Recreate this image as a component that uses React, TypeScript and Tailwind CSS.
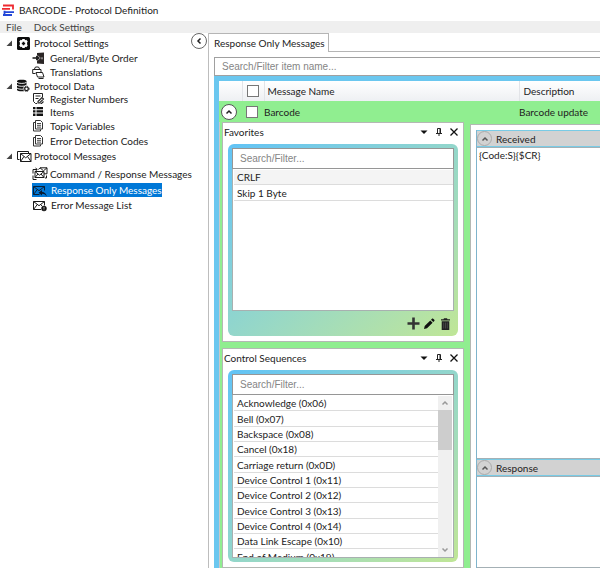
import type { ReactNode } from "react";
import { useState } from "react";

type IconName =
  | "settings"
  | "door"
  | "translate"
  | "database"
  | "register"
  | "items"
  | "pages"
  | "messages"
  | "exchange"
  | "reply"
  | "mailError";

const iconShapes: Record<IconName, ReactNode> = {
  settings: (
    <>
      <rect x="1" y="0" width="13" height="13" rx="1.5" fill="#0c0c0c" />
      <path
        d="M6.300 2h2.400l.3 1.300 1.300-.5 1.500 1.600-.7 1.100v2l.7 1.100-1.500 1.600-1.300-.5-.3 1.300H6.300L6 9.700l-1.300.5-1.500-1.600.7-1.100v-2l-.7-1.100 1.500-1.600 1.300.5z"
        fill="#fff"
      />
      <path d="M7.500 4.800v3.400M5.800 6.500h3.400" stroke="#0c0c0c" strokeWidth="1.600" />
    </>
  ),
  door: (
    <>
      <path d="M5 1L12 .5v11.500L5 11.500z" fill="#2b2626" />
      <path d="M.5 6H5" stroke="#222" strokeWidth="1.600" />
      <path d="M4 3.500L7.500 6 4 8.500z" fill="#222" />
      <path d="M5.500 3.500L8.300 6 5.500 8.500" stroke="#bbb" strokeWidth=".8" fill="none" />
      <path d="M10 5.300v2" stroke="#ddd" />
    </>
  ),
  translate: (
    <g fill="none" stroke="#222" strokeWidth="1">
      <path d="M3.500 7.500H.7V3.500H9V6M2.200 3.500L3.500 1h3l1.300 2.500" />
      <path d="M4 6.500h6.500l1.500 4.500H5.500z" fill="#fff" />
      <path d="M6.500 12.500h5" />
    </g>
  ),
  database: (
    <>
      <path d="M1 2.200C1 .3 10.500.3 10.500 2.200V11C10.500 12.800 1 12.800 1 11z" fill="#111" />
      <path
        d="M1 3.300c1.500 1.500 8 1.500 9.500 0M1 6.200c1.500 1.500 8 1.500 9.500 0M1 9.100c1.500 1.500 8 1.500 9.500 0"
        stroke="#fff"
        strokeWidth=".9"
        fill="none"
      />
      <circle cx="10.500" cy="9.800" r="3.300" fill="#fff" />
      <circle cx="10.500" cy="9.800" r="1.800" fill="none" stroke="#111" strokeWidth="1.200" />
      <circle cx="10.500" cy="9.800" r="2.600" fill="none" stroke="#111" strokeDasharray="1.100 1" />
    </>
  ),
  register: (
    <g fill="none" stroke="#222" strokeWidth="1">
      <path d="M5 11.500H3.500L1.500 9.500V1.500h9V5" />
      <path d="M3.500 4h5M3.500 6.500h3" />
      <path d="M6 9.500L10 5.500l1.500 1.500-4 4H6zM8.500 11.500h1l2-2" strokeWidth="1.100" />
    </g>
  ),
  items: (
    <path
      d="M1 2h2.500v2.300H1zM4.500 2H11v2.300H4.500zM1 5.300h2.500v2.300H1zM4.500 5.300H11v2.300H4.500zM1 8.600h2.500v2.300H1zM4.500 8.600H11v2.300H4.500z"
      fill="#111"
    />
  ),
  pages: (
    <g fill="none" stroke="#333" strokeWidth="1">
      <path d="M3.500 1.500h5l2 2v6.500h-7z" />
      <path d="M3 3.500H1.500v8.500h7V10.500" />
      <path d="M5 4.500h4M5 6.300h4M5 8.100h4" strokeWidth=".9" />
    </g>
  ),
  messages: (
    <g fill="none" stroke="#1a1a1a" strokeWidth="1">
      <path d="M3.500 9.500H1.500v-8h11v2" />
      <path d="M4.500 3.500h10.500v8H4.500z" fill="#fff" />
      <path d="M4.500 3.500l5.200 4.300L15 3.500M4.500 11.500l3.500-5M15 11.500l-3.500-5" />
    </g>
  ),
  exchange: (
    <g fill="none" stroke="#1a1a1a" strokeWidth="1">
      <path d="M6.500 2.500L8 .8h7v6h-3" />
      <path d="M8 .8l3.500 3 3.500-3" />
      <path d="M3 4.500h9v6H3z" fill="#fff" />
      <path d="M3 4.500L7.500 8.200 12 4.500M3 10.500l3-3.500M12 10.500L9 7" />
      <path d="M1 6.500V2.500h4M3.500 1l1.800 1.500L3.500 4M1 8.500v4h3.500M14.500 8.500V11h-1.500" />
    </g>
  ),
  reply: (
    <>
      <path
        d="M7.500 10.500H1.500v-8h11v4M1.500 2.500L7 6.700l5.500-4.200M1.500 10.500l3.800-5"
        stroke="#0b2239"
        fill="none"
      />
      <path d="M10 6L6.500 8.700 10 11.500v-1.700c2 0 3.300.7 4.800 2.700C14.500 9.700 12.500 7.800 10 7.700z" fill="#061a30" />
    </>
  ),
  mailError: (
    <>
      <path
        d="M9 10.500H1.500v-8h11v4M1.500 2.500L7 6.700l5.500-4.200M1.500 10.500l3.800-5M8.700 5.500L10 7"
        stroke="#1a1a1a"
        fill="none"
      />
      <circle cx="12" cy="9.500" r="2.700" fill="#111" />
      <path d="M12 7.800v2M12 10.500v.8" stroke="#fff" strokeWidth=".7" />
    </>
  ),
};

const TreeIcon = ({ name }: { name: IconName }) => (
  <svg width="16" height="13" viewBox="0 0 16 13" className="shrink-0" aria-hidden="true">
    {iconShapes[name]}
  </svg>
);

const Chevron = ({ direction }: { direction: "up" | "left" }) => (
  <svg width="8" height="8" viewBox="0 0 8 8" fill="none" stroke="currentColor" strokeWidth="1.500">
    <path d={direction === "up" ? "M1.500 5.500L4 3l2.500 2.500" : "M5.500 1.500L3 4l2.500 2.500"} />
  </svg>
);

const treeItems: {
  label: string;
  icon: IconName;
  row: string;
  root?: boolean;
  textGap?: string;
}[] = [
  { label: "Protocol Settings", icon: "settings", row: "h-4", root: true },
  { label: "General/Byte Order", icon: "door", row: "h-3.5", textGap: "pl-0.5" },
  { label: "Translations", icon: "translate", row: "h-3.5", textGap: "pl-0.5" },
  { label: "Protocol Data", icon: "database", row: "h-[13px]", root: true },
  { label: "Register Numbers", icon: "register", row: "h-[13px]", textGap: "pl-0.5" },
  { label: "Items", icon: "items", row: "h-[13px]", textGap: "pl-0.5" },
  { label: "Topic Variables", icon: "pages", row: "h-[15px]", textGap: "pl-0.5" },
  { label: "Error Detection Codes", icon: "pages", row: "h-[15px]", textGap: "pl-0.5" },
  { label: "Protocol Messages", icon: "messages", row: "h-4", root: true },
  { label: "Command / Response Messages", icon: "exchange", row: "h-[19px]", textGap: "pl-0.5" },
  { label: "Response Only Messages", icon: "reply", row: "h-3.5", textGap: "pl-[3px]" },
  { label: "Error Message List", icon: "mailError", row: "h-4", textGap: "pl-[3px]" },
];

const controlSequences = [
  "Acknowledge (0x06)",
  "Bell (0x07)",
  "Backspace (0x08)",
  "Cancel (0x18)",
  "Carriage return (0x0D)",
  "Device Control 1 (0x11)",
  "Device Control 2 (0x12)",
  "Device Control 3 (0x13)",
  "Device Control 4 (0x14)",
  "Data Link Escape (0x10)",
  "End of Medium (0x19)",
];

const ProtocolTree = () => {
  const [selected, setSelected] = useState("Response Only Messages");

  return (
    <nav className="w-[191px] shrink-0 pt-[2px]">
      <ul>
        {treeItems.map((item) => (
          <li key={item.label} className={`flex items-center ${item.row}`}>
            {item.root && (
              <svg width="6" height="6" viewBox="0 0 6 6" className="ml-1.5 mr-1 shrink-0">
                <path d="M6 .5v5.500H.5z" fill="#444" />
              </svg>
            )}
            <button
              onClick={() => setSelected(item.label)}
              className={`flex items-center h-3.5 whitespace-nowrap ${item.root ? "gap-0.5" : "ml-8"} ${
                selected === item.label ? "bg-[#0078d7] text-white" : ""
              }`}
            >
              <TreeIcon name={item.icon} />
              <span className={item.textGap}>{item.label}</span>
            </button>
          </li>
        ))}
      </ul>
    </nav>
  );
};

const PanelFrame = ({ title, children }: { title: string; children: ReactNode }) => (
  <section className="flex flex-col h-[220px] bg-white border border-[#b4b8b4] pb-[5px]">
    <header className="flex items-center h-[21px] shrink-0 pl-px pr-[5px] pb-[3px]">
      <h2 className="flex-1">{title}</h2>
      <div className="flex items-center gap-[7px]">
        <button aria-label="Window options" className="w-2 h-2">
          <svg width="8" height="8" viewBox="0 0 8 8">
            <path d="M.5 2.500h7L4 6z" fill="#111" />
          </svg>
        </button>
        <button aria-label="Pin" className="w-2 h-2">
          <svg width="8" height="8" viewBox="0 0 8 8" fill="none" stroke="#222">
            <path d="M2.500 5V.500h3V5M1 5.500h6M4 5.500V8M5 1v4" />
          </svg>
        </button>
        <button aria-label="Close" className="w-2 h-2">
          <svg width="8" height="8" viewBox="0 0 8 8" fill="none" stroke="#111" strokeWidth="1.300">
            <path d="M.500.500l7 7M7.500.500l-7 7" />
          </svg>
        </button>
      </div>
    </header>
    <div className="flex flex-col flex-1 min-h-0 mx-[5px] p-1 rounded-[6px] bg-linear-to-br from-[#61c3f6] to-[#c0e696]">
      {children}
    </div>
  </section>
);

const ListRow = ({ text, highlighted }: { text: string; highlighted?: boolean }) => (
  <li
    className={`flex items-center h-[15px] nth-[3n+2]:h-4 border-b border-[#dcdcdc] pl-[3px] ${
      highlighted ? "bg-[#f4f4f4]" : ""
    }`}
  >
    {text}
  </li>
);

const FilterInput = ({ label }: { label: string }) => (
  <input
    type="text"
    aria-label={label}
    placeholder="Search/Filter..."
    className="h-[21px] shrink-0 w-full bg-white border border-[#969696] px-[7px] font-['Liberation_Sans',Arial,sans-serif] placeholder:text-[#858585]"
  />
);

const FavoritesPanel = () => (
  <PanelFrame title="Favorites">
    <FilterInput label="Filter favorites" />
    <ul className="flex-1 bg-white border border-t-0 border-[#a8b0b0] pl-px pt-px">
      <ListRow text="CRLF" highlighted />
      <ListRow text="Skip 1 Byte" />
    </ul>
    <div className="flex items-center justify-end gap-[3px] h-[21px] pt-1 pr-1">
      <button aria-label="Add">
        <svg width="13" height="13" viewBox="0 0 13 13" stroke="#333" strokeWidth="2.600">
          <path d="M6.500.500v12M.500 6.500h12" />
        </svg>
      </button>
      <button aria-label="Edit">
        <svg width="12" height="12" viewBox="0 0 12 12" fill="#111">
          <path d="M1 11l.700-3L7.300 2.400l2.300 2.300L4 10.300zM8 1.700l1-1c.4-.4.9-.3 1.200 0l1.100 1.100c.4.4.4.8 0 1.200l-1 1z" />
        </svg>
      </button>
      <button aria-label="Delete" className="pl-[3px]">
        <svg width="9" height="12" viewBox="0 0 9 12" fill="#222">
          <path d="M0 1.200h2.500L3 .200h3l.500 1H9v1.300H0zM.700 3.200h7.600V12H.700z" />
          <path d="M2.700 4.500v6M4.500 4.500v6M6.300 4.500v6" stroke="#555" strokeWidth=".7" />
        </svg>
      </button>
    </div>
  </PanelFrame>
);

const ControlSequencesPanel = () => (
  <PanelFrame title="Control Sequences">
    <FilterInput label="Filter control sequences" />
    <div className="flex flex-1 min-h-0 bg-white border border-t-0 border-[#a8b0b0] pl-px pt-px pr-px">
      <ul className="flex-1 overflow-hidden">
        {controlSequences.map((name) => (
          <ListRow key={name} text={name} />
        ))}
      </ul>
      <div className="flex flex-col w-3.5 shrink-0 bg-[#f0f0f0] text-[#999]">
        <button aria-label="Scroll up" className="flex items-center justify-center h-3.5">
          <Chevron direction="up" />
        </button>
        <div className="h-10 bg-[#cdcdcd]" />
        <button aria-label="Scroll down" className="flex items-center justify-center h-3.5 mt-auto rotate-180">
          <Chevron direction="up" />
        </button>
      </div>
    </div>
  </PanelFrame>
);

const MessageSection = ({
  title,
  value,
  height,
}: {
  title: string;
  value: string;
  height: string;
}) => (
  <section className={`flex flex-col ${height}`}>
    <header className="flex items-center gap-1 h-[17px] shrink-0 bg-[#d2d2d2] border-y border-[#79cbe5]">
      <button
        aria-label={`Collapse ${title}`}
        className="flex items-center justify-center w-[15px] h-[15px] rounded-full border border-[#aaa] text-[#555]"
      >
        <Chevron direction="up" />
      </button>
      <h2>{title}</h2>
    </header>
    <textarea
      aria-label={title}
      defaultValue={value}
      className="flex-1 block w-full resize-none bg-white border-y border-[#a4b0b5] pl-0.5 pt-px outline-none"
    />
  </section>
);

const App = () => {
  return (
    <div className="flex flex-col h-screen overflow-hidden bg-white text-[#222] text-[10px] leading-3 font-[Lato,sans-serif]">
      <header className="flex items-center gap-1 h-[21px] shrink-0 pl-[2px] pb-0.5">
        <svg width="13" height="12" viewBox="0 0 13 12" fill="none" strokeWidth="1.800">
          <path d="M1 1.500h10M0 4.800h8M11 .6v5" stroke="#ee2a30" />
          <path d="M2 8.200h10M1 11h9M2.500 6.800v3.500" stroke="#2448d8" />
        </svg>
        <h1>BARCODE - Protocol Definition</h1>
      </header>
      <nav className="flex items-center gap-3 h-3 shrink-0 pl-1.5 bg-[#efefef] text-[#444]">
        <button>File</button>
        <button>Dock Settings</button>
      </nav>

      <div className="flex flex-1 min-h-0">
        <ProtocolTree />
        <div className="w-[17px] shrink-0">
          <button
            aria-label="Collapse tree"
            className="flex items-center justify-center w-4 h-4 rounded-full border border-[#666] text-[#222]"
          >
            <Chevron direction="left" />
          </button>
        </div>

        <main className="flex flex-col flex-1 min-w-0 border-l border-[#bdbdbd]">
          <div className="flex h-[19px] shrink-0">
            <button className="w-[120px] shrink-0 text-left pl-[5px] border-t border-r border-[#b5b5b5] whitespace-nowrap">
              Response Only Messages
            </button>
            <div className="flex-1 border-b border-[#b5b5b5]" />
          </div>

          <div className="flex flex-col flex-1 min-h-0 pl-[5px] pt-[5px]">
            <input
              type="text"
              aria-label="Filter messages"
              placeholder="Search/Filter item name..."
              className="h-[19px] shrink-0 w-full bg-white border border-r-0 border-[#a0a0a0] px-[7px] font-['Liberation_Sans',Arial,sans-serif] placeholder:text-[#858585]"
            />
            <div className="flex flex-col flex-1 min-h-0 pl-[5px] pt-[5px] bg-[#6bc7ef]">
              <table className="w-full shrink-0 table-fixed text-left">
                <colgroup>
                  <col className="w-[23px]" />
                  <col className="w-[22px]" />
                  <col />
                  <col className="w-[81px]" />
                </colgroup>
                <thead className="bg-linear-to-b from-white to-[#eef0f3]">
                  <tr className="h-5">
                    <th className="border-r border-[#e2e4e8]" />
                    <th className="border-r border-[#e2e4e8] pl-1">
                      <input
                        type="checkbox"
                        aria-label="Select all"
                        className="block appearance-none w-3 h-3 border border-[#777] bg-white"
                      />
                    </th>
                    <th className="border-r border-[#e2e4e8] font-normal pl-[3px]">Message Name</th>
                    <th className="font-normal pl-1">Description</th>
                  </tr>
                </thead>
                <tbody className="bg-[#90ee90]">
                  <tr className="h-[21px]">
                    <td className="pl-0.5">
                      <button
                        aria-label="Collapse row"
                        className="flex items-center justify-center w-4 h-4 rounded-full border border-[#555] bg-white"
                      >
                        <Chevron direction="up" />
                      </button>
                    </td>
                    <td className="pl-1">
                      <input
                        type="checkbox"
                        aria-label="Select Barcode"
                        className="block appearance-none w-3 h-3 border border-[#777] bg-white"
                      />
                    </td>
                    <td>Barcode</td>
                    <td>Barcode update</td>
                  </tr>
                </tbody>
              </table>

              <div className="flex flex-1 min-h-0 pl-0.5 gap-1.5 bg-[#90ee90] border-l border-[#c8c8c8]">
                <div className="flex flex-col w-[242px] shrink-0 gap-1.5">
                  <FavoritesPanel />
                  <ControlSequencesPanel />
                </div>
                <div className="flex flex-1 min-w-0 mt-0.5 pl-[5px] pt-[5px] bg-white border-l border-t border-[#b4b8b4]">
                  <div className="flex flex-col flex-1 min-w-0 border-l border-[#7fb4cc]">
                    <MessageSection title="Received" value="{Code:S}{$CR}" height="h-[329px]" />
                    <MessageSection title="Response" value="" height="flex-1" />
                  </div>
                </div>
              </div>
            </div>
          </div>
        </main>
      </div>
    </div>
  );
};

export default App;
